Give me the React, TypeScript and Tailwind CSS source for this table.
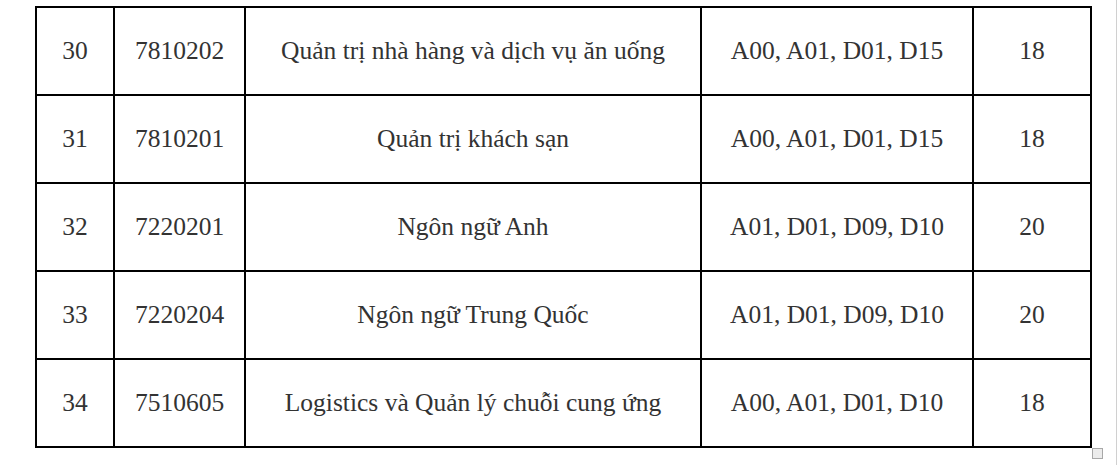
import React from "react";

const rows = [
  ["30", "7810202", "Quản trị nhà hàng và dịch vụ ăn uống", "A00, A01, D01, D15", "18"],
  ["31", "7810201", "Quản trị khách sạn", "A00, A01, D01, D15", "18"],
  ["32", "7220201", "Ngôn ngữ Anh", "A01, D01, D09, D10", "20"],
  ["33", "7220204", "Ngôn ngữ Trung Quốc", "A01, D01, D09, D10", "20"],
  ["34", "7510605", "Logistics và Quản lý chuỗi cung ứng", "A00, A01, D01, D10", "18"],
];

export default function App() {
  return (
    <div className="flex h-[465px] w-[1118px] bg-white">
      <div className="h-full w-[1117px] border-r border-[#d0d0d0] pl-[35px] pt-[6px]">
        <div className="relative w-[1057px]">
          <div className="grid grid-cols-[78px_131px_456px_272px_118px] border-l-2 border-t-2 border-black font-['Liberation_Serif','Times_New_Roman',serif] text-[25.5px] leading-none text-[#333]">
            {rows.map((r, i) =>
              r.map((c, j) => (
                <div
                  key={`${i}-${j}`}
                  className="flex h-[88px] items-center justify-center border-b-2 border-r-2 border-black pb-[1px]"
                >
                  {c}
                </div>
              ))
            )}
          </div>
          <div className="absolute right-[-11px] top-[442px] h-[11px] w-[11px] border border-[#a8a8a8] bg-[#ececec]" />
        </div>
      </div>
    </div>
  );
}
